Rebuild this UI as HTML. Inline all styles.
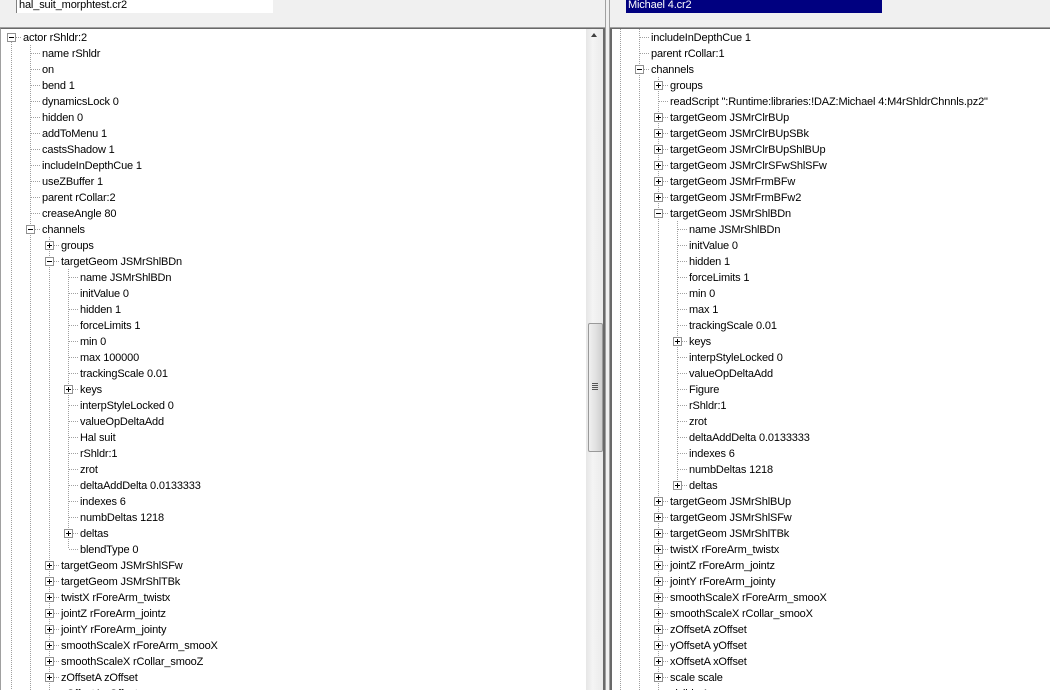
<!DOCTYPE html>
<html><head><style>
*{margin:0;padding:0;box-sizing:border-box}
html,body{width:1050px;height:690px;overflow:hidden}
body{background:#f0f0f0;font-family:"Liberation Sans",sans-serif;font-size:11px;color:#000}
#w{position:relative;width:1050px;height:690px;overflow:hidden}
.a{position:absolute}
.t{position:absolute;white-space:nowrap;line-height:16px;height:16px;letter-spacing:-0.15px;margin-top:1px}
.v{position:absolute;width:1px;background:repeating-linear-gradient(to bottom,#a0a0a0 0 1px,transparent 1px 2px)}
.h{position:absolute;height:1px;background:repeating-linear-gradient(to right,#a0a0a0 0 1px,transparent 1px 2px)}
.b{position:absolute;width:9px;height:9px;border:1px solid #919191;background:#fff}
.b:before{content:"";position:absolute;left:1px;top:3px;width:5px;height:1px;background:#000}
.p:after{content:"";position:absolute;left:3px;top:1px;width:1px;height:5px;background:#000}
</style></head><body><div id="w">
<div class="a" style="left:16px;top:0;width:257px;height:13px;background:#fff;border-left:1px solid #808080"></div>
<div class="t" style="left:19px;top:-4px">hal_suit_morphtest.cr2</div>
<div class="a" style="left:626px;top:0;width:256px;height:13px;background:#000080"></div>
<div class="t" style="left:628px;top:-4px;color:#fff">Michael 4.cr2</div>
<div class="a" style="left:0;top:27px;width:606px;height:1px;background:#a0a0a0"></div>
<div class="a" style="left:610px;top:27px;width:440px;height:1px;background:#a0a0a0"></div>
<div class="a" style="left:605px;top:0;width:1px;height:690px;background:#a0a0a0"></div>
<div class="a" style="left:609px;top:0;width:1px;height:690px;background:#a0a0a0"></div>
<div class="a" style="left:0;top:28px;width:605px;height:662px;background:#fff;border-left:1px solid #a0a0a0;border-top:1px solid #696969"></div>
<div class="a" style="left:603px;top:28px;width:2px;height:662px;background:#696969"></div>
<div class="a" style="left:610px;top:28px;width:440px;height:662px;background:#fff;border-left:2px solid #696969;border-top:1px solid #696969"></div>
<div class="a" style="left:586px;top:29px;width:17px;height:661px;background:linear-gradient(to right,#e6e6e6,#f4f4f4 40%,#eaeaea)"></div>
<div class="a" style="left:591px;top:33px;width:0;height:0;border-left:3.5px solid transparent;border-right:3.5px solid transparent;border-bottom:4px solid #404040"></div>
<div class="a" style="left:588px;top:323px;width:15px;height:129px;background:linear-gradient(to right,#f0f0f0,#e2e2e2 50%,#cfcfcf);border:1px solid #9a9a9a;border-radius:2px"></div>
<div class="a" style="left:592px;top:383px;width:6px;height:1px;background:#555;box-shadow:0 2px 0 #555,0 4px 0 #555,0 6px 0 #555"></div>

<div class="v" style="left:11px;top:42px;height:648px"></div>
<div class="v" style="left:30px;top:45px;height:645px"></div>
<div class="v" style="left:49px;top:237px;height:453px"></div>
<div class="v" style="left:68px;top:269px;height:280px"></div>
<div class="v" style="left:620px;top:29px;height:661px"></div>
<div class="v" style="left:639px;top:29px;height:661px"></div>
<div class="v" style="left:658px;top:77px;height:613px"></div>
<div class="v" style="left:677px;top:221px;height:264px"></div>

<div class="h" style="left:16px;top:37px;width:5px"></div><div class="b" style="left:7px;top:33px"></div><div class="t" style="left:23px;top:29px">actor rShldr:2</div>

<div class="h" style="left:31px;top:53px;width:9px"></div><div class="t" style="left:42px;top:45px">name rShldr</div>
<div class="h" style="left:31px;top:69px;width:9px"></div><div class="t" style="left:42px;top:61px">on</div>
<div class="h" style="left:31px;top:85px;width:9px"></div><div class="t" style="left:42px;top:77px">bend 1</div>
<div class="h" style="left:31px;top:101px;width:9px"></div><div class="t" style="left:42px;top:93px">dynamicsLock 0</div>
<div class="h" style="left:31px;top:117px;width:9px"></div><div class="t" style="left:42px;top:109px">hidden 0</div>
<div class="h" style="left:31px;top:133px;width:9px"></div><div class="t" style="left:42px;top:125px">addToMenu 1</div>
<div class="h" style="left:31px;top:149px;width:9px"></div><div class="t" style="left:42px;top:141px">castsShadow 1</div>
<div class="h" style="left:31px;top:165px;width:9px"></div><div class="t" style="left:42px;top:157px">includeInDepthCue 1</div>
<div class="h" style="left:31px;top:181px;width:9px"></div><div class="t" style="left:42px;top:173px">useZBuffer 1</div>
<div class="h" style="left:31px;top:197px;width:9px"></div><div class="t" style="left:42px;top:189px">parent rCollar:2</div>
<div class="h" style="left:31px;top:213px;width:9px"></div><div class="t" style="left:42px;top:205px">creaseAngle 80</div>
<div class="h" style="left:35px;top:229px;width:5px"></div><div class="b" style="left:26px;top:225px"></div><div class="t" style="left:42px;top:221px">channels</div>

<div class="h" style="left:54px;top:245px;width:5px"></div><div class="b p" style="left:45px;top:241px"></div><div class="t" style="left:61px;top:237px">groups</div>
<div class="h" style="left:54px;top:261px;width:5px"></div><div class="b" style="left:45px;top:257px"></div><div class="t" style="left:61px;top:253px">targetGeom JSMrShlBDn</div>

<div class="h" style="left:69px;top:277px;width:9px"></div><div class="t" style="left:80px;top:269px">name JSMrShlBDn</div>
<div class="h" style="left:69px;top:293px;width:9px"></div><div class="t" style="left:80px;top:285px">initValue 0</div>
<div class="h" style="left:69px;top:309px;width:9px"></div><div class="t" style="left:80px;top:301px">hidden 1</div>
<div class="h" style="left:69px;top:325px;width:9px"></div><div class="t" style="left:80px;top:317px">forceLimits 1</div>
<div class="h" style="left:69px;top:341px;width:9px"></div><div class="t" style="left:80px;top:333px">min 0</div>
<div class="h" style="left:69px;top:357px;width:9px"></div><div class="t" style="left:80px;top:349px">max 100000</div>
<div class="h" style="left:69px;top:373px;width:9px"></div><div class="t" style="left:80px;top:365px">trackingScale 0.01</div>
<div class="h" style="left:73px;top:389px;width:5px"></div><div class="b p" style="left:64px;top:385px"></div><div class="t" style="left:80px;top:381px">keys</div>
<div class="h" style="left:69px;top:405px;width:9px"></div><div class="t" style="left:80px;top:397px">interpStyleLocked 0</div>
<div class="h" style="left:69px;top:421px;width:9px"></div><div class="t" style="left:80px;top:413px">valueOpDeltaAdd</div>
<div class="h" style="left:69px;top:437px;width:9px"></div><div class="t" style="left:80px;top:429px">Hal suit</div>
<div class="h" style="left:69px;top:453px;width:9px"></div><div class="t" style="left:80px;top:445px">rShldr:1</div>
<div class="h" style="left:69px;top:469px;width:9px"></div><div class="t" style="left:80px;top:461px">zrot</div>
<div class="h" style="left:69px;top:485px;width:9px"></div><div class="t" style="left:80px;top:477px">deltaAddDelta 0.0133333</div>
<div class="h" style="left:69px;top:501px;width:9px"></div><div class="t" style="left:80px;top:493px">indexes 6</div>
<div class="h" style="left:69px;top:517px;width:9px"></div><div class="t" style="left:80px;top:509px">numbDeltas 1218</div>
<div class="h" style="left:73px;top:533px;width:5px"></div><div class="b p" style="left:64px;top:529px"></div><div class="t" style="left:80px;top:525px">deltas</div>
<div class="h" style="left:69px;top:549px;width:9px"></div><div class="t" style="left:80px;top:541px">blendType 0</div>

<div class="h" style="left:54px;top:565px;width:5px"></div><div class="b p" style="left:45px;top:561px"></div><div class="t" style="left:61px;top:557px">targetGeom JSMrShlSFw</div>
<div class="h" style="left:54px;top:581px;width:5px"></div><div class="b p" style="left:45px;top:577px"></div><div class="t" style="left:61px;top:573px">targetGeom JSMrShlTBk</div>
<div class="h" style="left:54px;top:597px;width:5px"></div><div class="b p" style="left:45px;top:593px"></div><div class="t" style="left:61px;top:589px">twistX rForeArm_twistx</div>
<div class="h" style="left:54px;top:613px;width:5px"></div><div class="b p" style="left:45px;top:609px"></div><div class="t" style="left:61px;top:605px">jointZ rForeArm_jointz</div>
<div class="h" style="left:54px;top:629px;width:5px"></div><div class="b p" style="left:45px;top:625px"></div><div class="t" style="left:61px;top:621px">jointY rForeArm_jointy</div>
<div class="h" style="left:54px;top:645px;width:5px"></div><div class="b p" style="left:45px;top:641px"></div><div class="t" style="left:61px;top:637px">smoothScaleX rForeArm_smooX</div>
<div class="h" style="left:54px;top:661px;width:5px"></div><div class="b p" style="left:45px;top:657px"></div><div class="t" style="left:61px;top:653px">smoothScaleX rCollar_smooZ</div>
<div class="h" style="left:54px;top:677px;width:5px"></div><div class="b p" style="left:45px;top:673px"></div><div class="t" style="left:61px;top:669px">zOffsetA zOffset</div>
<div class="t" style="left:61px;top:685px">yOffsetA yOffset</div>

<div class="h" style="left:640px;top:37px;width:9px"></div><div class="t" style="left:651px;top:29px">includeInDepthCue 1</div>
<div class="h" style="left:640px;top:53px;width:9px"></div><div class="t" style="left:651px;top:45px">parent rCollar:1</div>
<div class="h" style="left:644px;top:69px;width:5px"></div><div class="b" style="left:635px;top:65px"></div><div class="t" style="left:651px;top:61px">channels</div>

<div class="h" style="left:663px;top:85px;width:5px"></div><div class="b p" style="left:654px;top:81px"></div><div class="t" style="left:670px;top:77px">groups</div>
<div class="h" style="left:659px;top:101px;width:9px"></div><div class="t" style="left:670px;top:93px">readScript ":Runtime:libraries:!DAZ:Michael 4:M4rShldrChnnls.pz2"</div>
<div class="h" style="left:663px;top:117px;width:5px"></div><div class="b p" style="left:654px;top:113px"></div><div class="t" style="left:670px;top:109px">targetGeom JSMrClrBUp</div>
<div class="h" style="left:663px;top:133px;width:5px"></div><div class="b p" style="left:654px;top:129px"></div><div class="t" style="left:670px;top:125px">targetGeom JSMrClrBUpSBk</div>
<div class="h" style="left:663px;top:149px;width:5px"></div><div class="b p" style="left:654px;top:145px"></div><div class="t" style="left:670px;top:141px">targetGeom JSMrClrBUpShlBUp</div>
<div class="h" style="left:663px;top:165px;width:5px"></div><div class="b p" style="left:654px;top:161px"></div><div class="t" style="left:670px;top:157px">targetGeom JSMrClrSFwShlSFw</div>
<div class="h" style="left:663px;top:181px;width:5px"></div><div class="b p" style="left:654px;top:177px"></div><div class="t" style="left:670px;top:173px">targetGeom JSMrFrmBFw</div>
<div class="h" style="left:663px;top:197px;width:5px"></div><div class="b p" style="left:654px;top:193px"></div><div class="t" style="left:670px;top:189px">targetGeom JSMrFrmBFw2</div>
<div class="h" style="left:663px;top:213px;width:5px"></div><div class="b" style="left:654px;top:209px"></div><div class="t" style="left:670px;top:205px">targetGeom JSMrShlBDn</div>

<div class="h" style="left:678px;top:229px;width:9px"></div><div class="t" style="left:689px;top:221px">name JSMrShlBDn</div>
<div class="h" style="left:678px;top:245px;width:9px"></div><div class="t" style="left:689px;top:237px">initValue 0</div>
<div class="h" style="left:678px;top:261px;width:9px"></div><div class="t" style="left:689px;top:253px">hidden 1</div>
<div class="h" style="left:678px;top:277px;width:9px"></div><div class="t" style="left:689px;top:269px">forceLimits 1</div>
<div class="h" style="left:678px;top:293px;width:9px"></div><div class="t" style="left:689px;top:285px">min 0</div>
<div class="h" style="left:678px;top:309px;width:9px"></div><div class="t" style="left:689px;top:301px">max 1</div>
<div class="h" style="left:678px;top:325px;width:9px"></div><div class="t" style="left:689px;top:317px">trackingScale 0.01</div>
<div class="h" style="left:682px;top:341px;width:5px"></div><div class="b p" style="left:673px;top:337px"></div><div class="t" style="left:689px;top:333px">keys</div>
<div class="h" style="left:678px;top:357px;width:9px"></div><div class="t" style="left:689px;top:349px">interpStyleLocked 0</div>
<div class="h" style="left:678px;top:373px;width:9px"></div><div class="t" style="left:689px;top:365px">valueOpDeltaAdd</div>
<div class="h" style="left:678px;top:389px;width:9px"></div><div class="t" style="left:689px;top:381px">Figure</div>
<div class="h" style="left:678px;top:405px;width:9px"></div><div class="t" style="left:689px;top:397px">rShldr:1</div>
<div class="h" style="left:678px;top:421px;width:9px"></div><div class="t" style="left:689px;top:413px">zrot</div>
<div class="h" style="left:678px;top:437px;width:9px"></div><div class="t" style="left:689px;top:429px">deltaAddDelta 0.0133333</div>
<div class="h" style="left:678px;top:453px;width:9px"></div><div class="t" style="left:689px;top:445px">indexes 6</div>
<div class="h" style="left:678px;top:469px;width:9px"></div><div class="t" style="left:689px;top:461px">numbDeltas 1218</div>
<div class="h" style="left:682px;top:485px;width:5px"></div><div class="b p" style="left:673px;top:481px"></div><div class="t" style="left:689px;top:477px">deltas</div>

<div class="h" style="left:663px;top:501px;width:5px"></div><div class="b p" style="left:654px;top:497px"></div><div class="t" style="left:670px;top:493px">targetGeom JSMrShlBUp</div>
<div class="h" style="left:663px;top:517px;width:5px"></div><div class="b p" style="left:654px;top:513px"></div><div class="t" style="left:670px;top:509px">targetGeom JSMrShlSFw</div>
<div class="h" style="left:663px;top:533px;width:5px"></div><div class="b p" style="left:654px;top:529px"></div><div class="t" style="left:670px;top:525px">targetGeom JSMrShlTBk</div>
<div class="h" style="left:663px;top:549px;width:5px"></div><div class="b p" style="left:654px;top:545px"></div><div class="t" style="left:670px;top:541px">twistX rForeArm_twistx</div>
<div class="h" style="left:663px;top:565px;width:5px"></div><div class="b p" style="left:654px;top:561px"></div><div class="t" style="left:670px;top:557px">jointZ rForeArm_jointz</div>
<div class="h" style="left:663px;top:581px;width:5px"></div><div class="b p" style="left:654px;top:577px"></div><div class="t" style="left:670px;top:573px">jointY rForeArm_jointy</div>
<div class="h" style="left:663px;top:597px;width:5px"></div><div class="b p" style="left:654px;top:593px"></div><div class="t" style="left:670px;top:589px">smoothScaleX rForeArm_smooX</div>
<div class="h" style="left:663px;top:613px;width:5px"></div><div class="b p" style="left:654px;top:609px"></div><div class="t" style="left:670px;top:605px">smoothScaleX rCollar_smooX</div>
<div class="h" style="left:663px;top:629px;width:5px"></div><div class="b p" style="left:654px;top:625px"></div><div class="t" style="left:670px;top:621px">zOffsetA zOffset</div>
<div class="h" style="left:663px;top:645px;width:5px"></div><div class="b p" style="left:654px;top:641px"></div><div class="t" style="left:670px;top:637px">yOffsetA yOffset</div>
<div class="h" style="left:663px;top:661px;width:5px"></div><div class="b p" style="left:654px;top:657px"></div><div class="t" style="left:670px;top:653px">xOffsetA xOffset</div>
<div class="h" style="left:663px;top:677px;width:5px"></div><div class="b p" style="left:654px;top:673px"></div><div class="t" style="left:670px;top:669px">scale scale</div>
<div class="t" style="left:670px;top:685px">visible 1</div>
</div></body></html>
